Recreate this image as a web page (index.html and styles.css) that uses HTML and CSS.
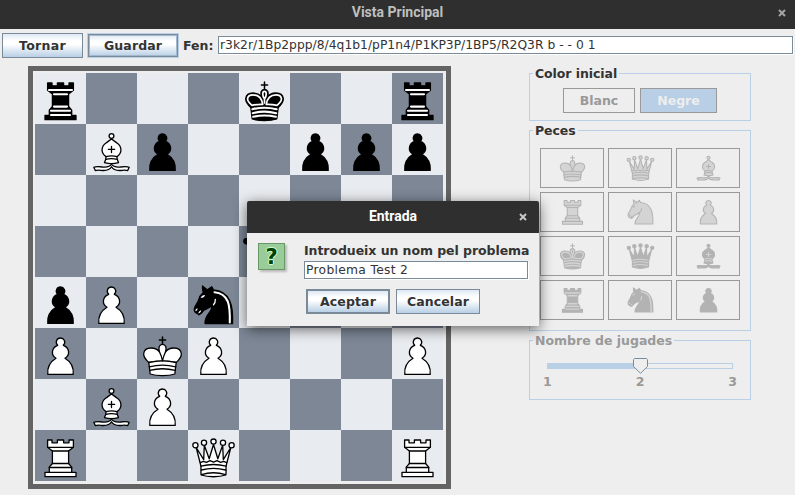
FILE: index.html
```html
<!DOCTYPE html>
<html lang="ca">
<head>
<meta charset="utf-8">
<title>Vista Principal</title>
<link rel="stylesheet" href="styles.css">
</head>
<body>
<header class="titlebar"><span class="title">Vista Principal</span>
<svg class="close" viewBox="0 0 8 8"><path d="M1 1L7 7M7 1L1 7"/></svg></header>
<div class="toolbar">
<button class="btn tornar">Tornar</button>
<button class="btn guardar">Guardar</button>
<label class="fen">Fen:</label>
<div class="field fenfield"><span>r3k2r/1Bp2ppp/8/4q1b1/pP1n4/P1KP3P/1BP5/R2Q3R b - - 0 1</span></div>
</div>
<main class="content">
<div class="board" id="board"></div>
<aside class="side">
<section class="group color"><h2>Color inicial</h2>
<div class="toggles"><span class="toggle blanc">Blanc</span><span class="toggle negre">Negre</span></div></section>
<section class="group peces"><h2>Peces</h2><div class="palette" id="palette"></div></section>
<section class="group moves"><h2 class="off">Nombre de jugades</h2>
<div class="slider"><div class="track"><div class="done"></div></div>
<svg class="thumb" viewBox="0 0 15 16"><path d="M1.5 .5H13.5L14.5 1.5V8.5L7.5 15.3L.5 8.5V1.5Z"/></svg></div>
<div class="ticks"><span>1</span><span>2</span><span>3</span></div></section>
</aside>
</main>
<div class="dialog">
<header class="dlgtitle"><span class="title">Entrada</span>
<svg class="close" viewBox="0 0 8 8"><path d="M1 1L7 7M7 1L1 7"/></svg></header>
<div class="dlgbody">
<div class="qicon"><span>?</span></div>
<div class="form">
<div class="prompt">Introdueix un nom pel problema</div>
<div class="field name"><span>Problema Test 2</span></div>
<div class="actions"><button class="btn accept">Aceptar</button><button class="btn cancel">Cancelar</button></div>
</div>
</div>
</div>
<script src="pieces.js"></script>
</body>
</html>
```
FILE: styles.css
```css
*{box-sizing:border-box}
body{margin:0;width:795px;height:495px;overflow:hidden;background:#eee;color:#333;font:bold 12.5px "DejaVu Sans",sans-serif;position:relative}
.titlebar{height:29px;background:#2f2f2f;display:flex;align-items:center;justify-content:center;position:relative;padding-bottom:5px}
.title{font:bold 14px/16px Roboto,sans-serif;color:#bfbfbf}
.close{position:absolute;right:9px;top:9px;width:8px;height:8px;fill:none;stroke:#a5a5a5;stroke-width:2}
.toolbar{height:37px;display:flex;align-items:flex-start;padding:4px 2px 0}
.btn{height:25px;border:1px solid #7a8a99;background:linear-gradient(#dde8f3 0,#fff 30%,#fff 45%,#b8cfe5 100%);font:bold 12.5px/16px "DejaVu Sans",sans-serif;color:#333;padding:0;letter-spacing:.12px}
.tornar{width:81px;letter-spacing:.3px}
.guardar{width:90px;height:23px;margin:1px 0 0 5px;outline:1px solid #b8cfe5;box-shadow:inset 0 0 0 1px #a3b8cc}
.fen{margin:5px 4px 0 5px;line-height:16px;width:31px}
.field{height:18px;border:1px solid #7a8a99;background:#fff;box-shadow:1px 1px 0 #fff;font-weight:normal;font-size:12.3px;line-height:17px;padding-left:1px;white-space:pre}
.fenfield{flex:1;margin-top:3px;letter-spacing:.02px}
.content{display:flex;padding-left:28px}
.board{width:423px;height:423px;border:5px solid #646464;padding:2px;display:grid;grid-template-columns:repeat(8,51px);grid-template-rows:repeat(8,51px)}
.light{background:#e8ebef}
.dark{background:#7d8796}
.piece{display:block;width:51px;height:51px;stroke:var(--ink);stroke-width:1.3;stroke-linejoin:round;stroke-linecap:round}
.sq{--ink:#000;--paper:#fff}
.white .shape{fill:var(--paper)}
.black .shape{fill:var(--ink)}
.line{fill:none}
.black .line{stroke:var(--paper)}
.black .fill{fill:var(--paper);stroke:none}
.black .medium{stroke-width:1.7}
.black .thick{stroke-width:2.1}
.cross{stroke-width:1.5;fill:none}
.side{width:222px;margin:7px 0 0 78px}
.group{position:relative;border:1px solid #b8cfe5}
.group h2{position:absolute;left:3px;top:-8px;margin:0;padding:0 2px;background:#eee;font:bold 12.5px/16px "DejaVu Sans",sans-serif;white-space:nowrap;letter-spacing:-.07px}
.group .off{color:#999;letter-spacing:0}
.color{height:48px;padding:14px 0 0 33px}
.toggles{display:flex;gap:5px}
.toggle{height:25px;border:1px solid #999;text-align:center;line-height:24px;color:#999}
.blanc{width:72px}
.negre{width:77px;background:#b8cfe5;color:#eee}
.peces{margin-top:9px;height:201px;padding:17px 10px 0}
.palette{display:grid;grid-template-columns:repeat(3,64px);gap:4px}
.slot{--ink:#b3b3b3;--paper:#d4d4d4;height:40px;border:1px solid #999;display:flex;justify-content:center}
.slot .piece{width:33px;height:33px;margin-top:1px;stroke-width:1.6}
.moves{margin-top:9px;height:60px;padding:22px 17px 0}
.slider{position:relative;width:186px}
.track{height:6px;border:1px solid #b8cfe5}
.done{height:4px;width:50%;background:#b8cfe5}
.thumb{position:absolute;left:86px;top:-5px;width:15px;height:16px;fill:#eee;stroke:#7a8a99}
.ticks{display:flex;justify-content:space-between;margin:5px -4px 0;color:#999;line-height:16px}
.dialog{position:absolute;left:247px;top:201px;width:292px;height:125px;background:#eee;box-shadow:0 3px 14px rgba(0,0,0,.6);border-radius:2px 2px 0 0}
.dlgtitle{height:32px;background:#2f2f2f;display:flex;align-items:center;justify-content:center;position:relative;padding-bottom:2px;border-radius:2px 2px 0 0}
.dlgtitle .title{color:#fff}
.dlgtitle .close{right:12px;top:12px;stroke:#c8c8c8}
.dlgbody{display:flex;padding:10px 0 0 11px}
.qicon{width:27px;height:27px;border:1px solid #669966;background:#9c9;box-shadow:2px 2px 2px #bbb;text-align:center;font-size:21px;line-height:26px;color:#004000;text-shadow:1px 0 #cfc,-1px 0 #cfc,0 1px #cfc,0 -1px #cfc}
.form{margin-left:19px;width:225px}
.prompt{line-height:16px;white-space:nowrap;letter-spacing:-.06px}
.name{margin-top:2px;width:224px;letter-spacing:.3px}
.actions{display:flex;gap:6px;margin:10px 0 0 2px}
.actions .btn{width:84px}
.actions .accept{border-width:2px}
```
FILE: pieces.js
```js
const ball = (x, y, r) => `<circle class="shape" cx="${x}" cy="${y}" r="${r}"/>`;
const shape = d => `<path class="shape" d="${d}"/>`;
const line = (d, extra = '') => `<path class="line ${extra}" d="${d}"/>`;
const fill = d => `<path class="fill" d="${d}"/>`;

const pawn = shape('M12.8 46.4H38.2C39 38.5 35.5 33.5 30 30.2C35.5 27 34.5 19.5 28.3 17.3C31.4 14 29 10 25.5 10S19.6 14 22.7 17.3C16.5 19.5 15.5 27 21 30.2C15.5 33.5 12 38.5 12.8 46.4Z');

const rookShape = shape('M12.6 10H17V12.8H22.4V10H28.6V12.8H34V10H38.4V17.3L33.6 21V33.5L36.7 37.2V42.3H41V46.7H10V42.3H14.3V37.2L17.4 33.5V21L12.6 17.3Z');

const kingCross = '<path class="cross" d="M25.5 9V16M22.4 12.1H28.6"/>';
const kingLobes = shape('M11.8 34.5C8.5 31.5 6.4 28.5 6.7 25.5C7.2 21.5 10.5 20 14 20C18 20 21 21.5 22.6 24.3C21 19.5 22.3 16.3 25.5 16.3S30 19.5 28.4 24.3C30 21.5 33 20 37 20C40.5 20 43.8 21.5 44.3 25.5C44.6 28.5 42.5 31.5 39.2 34.5C30 32.5 21 32.5 11.8 34.5Z');
const kingBase = shape('M11.8 34.5C21 32.3 30 32.3 39.2 34.5L37.8 46C31 48.2 20 48.2 13.2 46Z');

const queenShape = shape('M12.8 35.5L8.2 17.5L15.7 29.7L16.3 15.2L21.2 28.8L25.5 14.5L29.8 28.8L34.7 15.2L35.3 29.7L42.8 17.5L38.2 35.5C37.6 38.5 38.5 41 37.8 45C31 47.3 20 47.3 13.2 45C12.5 41 13.4 38.5 12.8 35.5Z');
const queenBalls = ball(7.4, 15.2, 2.6) + ball(16, 12.7, 2.6) + ball(25.5, 11.6, 2.6) + ball(35, 12.7, 2.6) + ball(43.6, 15.2, 2.6);

const bishopFeet = shape('M25.5 40.3C24 43 20 43.3 16.5 43C13 42.6 10 42.3 7.8 43.3L9.3 46.6C12 45.6 14.5 46.5 17.5 46.5C21.5 46.5 24 45.5 25.5 42.8C27 45.5 29.5 46.5 33.5 46.5C36.5 46.5 39 45.6 41.7 46.6L43.2 43.3C41 42.3 38 42.6 34.5 43C31 43.3 27 43 25.5 40.3Z');
const bishopBody = ball(25.5, 12, 2.4) + shape('M20 32.6C14.5 29 15 22.5 20 19C22.5 17.2 24.5 16 25.5 14.6C26.5 16 28.5 17.2 31 19C36 22.5 36.5 29 31 32.6L31.2 35.2L32.5 38.6C28 40 23 40 18.5 38.6L19.8 35.2Z');

const knightShape = shape('M14.5 9L19.4 12.9L23.8 9.8L25.6 13C33 13.5 38.5 17 41.6 23.5C44.6 30 45 37 44.6 46.5H17C16.8 40.5 20 37.5 22.5 34C23.8 32 24 30.5 23.5 29C21 31 18.5 31.8 16.5 32.8C14.5 34.2 13.5 37.5 10.8 37.8L9.6 36.6L8.6 36.2C6.2 35.5 5.8 32.5 6.8 30.2C8 27.5 10 25.5 10.8 22.5C11.3 19.5 13 17.5 15.3 15.5C14.6 13.5 14.2 11.5 14.5 9Z');

const art = {
  P: pawn,
  p: pawn,
  R: rookShape + line('M12.8 17.3H38.2M17.4 21H33.6M17.4 33.5H33.6M14.3 37.5H36.7M14.3 42.3H36.7'),
  r: rookShape + line('M14 17H37M19 21.2H32M19 33.6H32M16 37.7H35M16 42H35', 'thick') ,
  K: kingLobes + kingBase + kingCross + line('M22.6 24.3C24 27 25 30 25.5 33C26 30 27 27 28.4 24.3M12.3 38.8C21 36.5 30 36.5 38.7 38.8M12.7 42.3C21 40.3 30 40.3 38.3 42.3'),
  k: kingLobes + kingBase + kingCross +
    line('M13 32.3C9.7 29.5 8.3 27.5 8.6 25.6C9 22.8 11.3 21.9 14 21.9C19.5 21.9 22.8 25.5 23.7 31.3C20 31.2 16 31.6 13 32.3ZM38 32.3C41.3 29.5 42.7 27.5 42.4 25.6C42 22.8 39.7 21.9 37 21.9C31.5 21.9 28.2 25.5 27.3 31.3C31 31.2 35 31.6 38 32.3Z', 'medium') +
    line('M25.5 30V26C23 22.5 23.3 18.3 25.5 18.3S28 22.5 25.5 26', 'medium') +
    line('M13.4 36.2C21 34.3 30 34.3 37.6 36.2M13.8 40.2C21 38.3 30 38.3 37.2 40.2M14.2 43.8C21 42.3 30 42.3 36.8 43.8', 'thick'),
  Q: queenShape + queenBalls + line('M12.3 32.6L15.5 31.3L18.4 32.3L22 30.7L25.5 32.2L29 30.7L32.6 32.3L35.5 31.3L38.7 32.6M12.9 36.2C21 34 30 34 38.1 36.2M13.3 40C21 38 30 38 37.7 40M13.3 44.5C21 42.3 30 42.3 37.7 44.5'),
  q: queenShape + queenBalls + line('M14 34.5C21 32.3 30 32.3 37 34.5M14.5 38.3C21 36.5 30 36.5 36.5 38.3M14.5 42.5C21 40.7 30 40.7 36.5 42.5'),
  B: bishopFeet + bishopBody + line('M20 32.6C24 31.5 27 31.5 31 32.6M19.8 35.4C24 34.3 27 34.3 31.2 35.4M25.5 22.3V28.5M22.4 25.4H28.6'),
  b: bishopFeet + bishopBody + line('M20.5 32.4C24 31.5 27 31.5 30.5 32.4M20.3 35.8C24 34.8 27 34.8 30.7 35.8M25.5 22.3V28.5M22.4 25.4H28.6'),
  N: knightShape + line('M27 22.3C27.2 25 26 27.5 23.5 29M14 20.5L16.3 18.6M8.3 33.5L9 32.3M10.8 36.2L12.5 34.2M19.4 12.9L18.5 14.5'),
  n: knightShape + line('M26.5 15.2C33 15.7 37.5 19 39.8 24.5C41.8 30 42 37 41.8 45.5', 'thick') +
    line('M27.3 22.3C27.5 24.5 26.8 26.5 25.5 27.8') +
    fill('M12.6 20.8C13.3 19 14.8 18 17 17.9C16.8 19.8 15 20.8 12.6 20.8ZM7.5 34.3C7.2 32.8 8 31.6 9.6 31.3C9.6 32.8 9 33.8 7.5 34.3ZM10.4 36.4C10.5 34.8 11.5 33.6 13.2 33.2C13.2 34.8 12 36 10.4 36.4Z')
};

function piece(c) {
  const side = c === c.toUpperCase() ? 'white' : 'black';
  return `<svg class="piece ${side}" viewBox="0 0 51 51">${art[c]}</svg>`;
}

const placement = 'r3k2r/1Bp2ppp/8/4q1b1/pP1n4/P1KP3P/1BP5/R2Q3R';
placement.split('/').forEach((row, y) => {
  [...row.replace(/\d/g, d => '.'.repeat(+d))].forEach((c, x) => {
    const sq = document.createElement('div');
    sq.className = 'sq ' + ((x + y) % 2 ? 'dark' : 'light');
    if (c !== '.') sq.innerHTML = piece(c);
    document.getElementById('board').append(sq);
  });
});

[...'KQBRNPkqbrnp'].forEach(c => {
  const slot = document.createElement('div');
  slot.className = 'slot';
  slot.innerHTML = piece(c);
  document.getElementById('palette').append(slot);
});
```
